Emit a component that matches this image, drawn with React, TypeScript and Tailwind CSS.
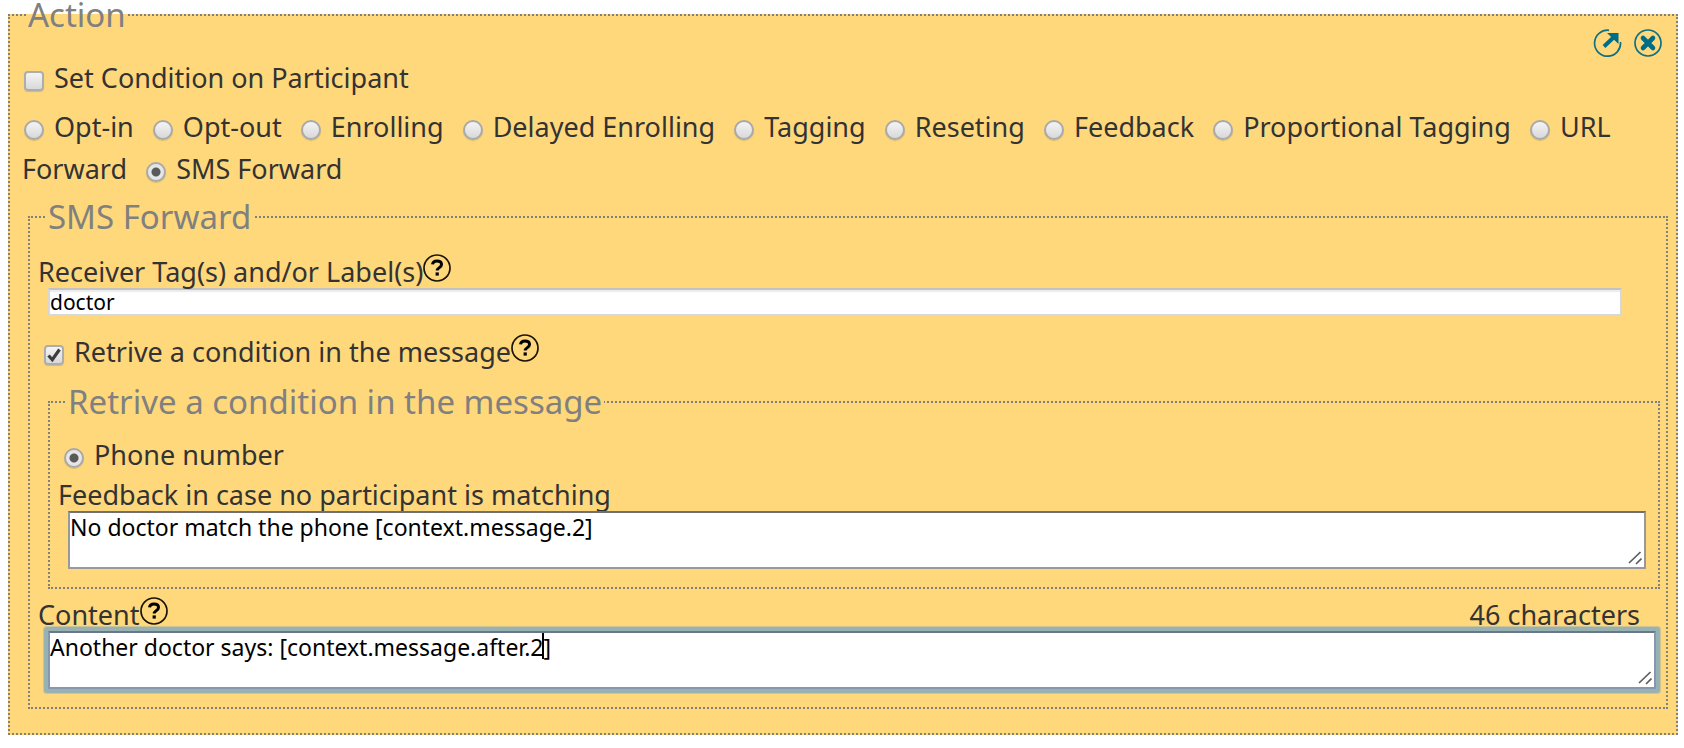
import { useId, useState } from "react";
import type { InputHTMLAttributes, ReactNode } from "react";

function Legend({ children, className }: { children: ReactNode; className: string }) {
  return (
    <legend className={`px-0.5 text-[33px] leading-7 text-[#808080] ${className}`}>{children}</legend>
  );
}

function Help() {
  return (
    <svg viewBox="0 0 28 28" className="inline size-7 align-baseline" role="img" aria-label="Help">
      <circle cx="14" cy="14" r="13" fill="none" stroke="#1a1408" strokeWidth="1.7" />
      <path
        d="M9.500 10.400C9.800 8 11.500 7 14 7c2.700 0 4.500 1.300 4.500 3.400 0 3.200-4.300 3.200-4.300 6.200"
        fill="none"
        stroke="#000"
        strokeWidth="3"
      />
      <rect x="12.600" y="18.400" width="3.200" height="3.200" fill="#000" />
    </svg>
  );
}

function Radio(props: InputHTMLAttributes<HTMLInputElement>) {
  return (
    <input
      type="radio"
      className="mr-2.5 ml-0.5 inline-block size-5 appearance-none rounded-full border-2 border-[#a9a9a9] bg-linear-to-b from-[#f4f4f4] to-[#d9d9d9] align-[-3px] shadow-[0_1px_1px_rgba(0,0,0,0.15)] checked:bg-[radial-gradient(circle,#5a5a5a_4px,#e6e6e6_5px)]"
      {...props}
    />
  );
}

function Checkbox(props: InputHTMLAttributes<HTMLInputElement>) {
  return (
    <span className="relative mr-2.5 ml-0.5 inline-block size-5 align-[-3px]">
      <input
        type="checkbox"
        className="peer block size-5 appearance-none rounded-[4px] border-2 border-[#adadad] bg-linear-to-b from-[#f4f4f4] to-[#d9d9d9] shadow-[0_1px_1px_rgba(0,0,0,0.15)]"
        {...props}
      />
      <svg
        viewBox="0 0 20 20"
        className="pointer-events-none absolute inset-0 hidden size-5 peer-checked:block"
        aria-hidden="true"
      >
        <path d="M4.500 10.500l3.800 4.200L15.500 4.500" fill="none" stroke="#3c3c3c" strokeWidth="3.200" />
      </svg>
    </span>
  );
}

function Grip() {
  return (
    <svg
      viewBox="0 0 14 14"
      className="pointer-events-none absolute right-1 bottom-1 size-3.5"
      aria-hidden="true"
    >
      <path d="M1 12L12.500 1M8 13l5.500-5.500" fill="none" stroke="#5c5c5c" strokeWidth="1.700" />
    </svg>
  );
}

const actions = [
  "Opt-in",
  "Opt-out",
  "Enrolling",
  "Delayed Enrolling",
  "Tagging",
  "Reseting",
  "Feedback",
  "Proportional Tagging",
  "URL Forward",
  "SMS Forward",
];

export default function App() {
  const id = useId();
  const [action, setAction] = useState("SMS Forward");

  return (
    <div className="bg-white pt-px pr-1.5 pb-3 pl-2 font-['Noto_Sans',sans-serif] text-[27px] leading-8 text-[#333]">
      <fieldset className="border-2 border-dotted border-[#808080] bg-[#ffd87c] pr-2 pb-6 pl-3">
        <Legend className="ml-1">Action</Legend>

        <div className="flex h-7 justify-end gap-3 pr-1.5">
          <button type="button" aria-label="Expand" className="h-7 w-[30px]">
            <svg viewBox="0 0 30 28" className="h-7 w-[30px]" fill="none" aria-hidden="true">
              <path d="M17 1.300A13 13 0 1 0 28.500 13" stroke="#0e7080" strokeWidth="1.700" />
              <path d="M12 17.500L22 8" stroke="#006c86" strokeWidth="4" />
              <path d="M15 4h11.500v11z" fill="#006c86" />
            </svg>
          </button>
          <button type="button" aria-label="Close" className="size-7">
            <svg viewBox="0 0 28 28" className="size-7" fill="none" aria-hidden="true">
              <circle cx="14" cy="14" r="13" stroke="#0e7080" strokeWidth="1.700" />
              <path d="M9 9l10 10M19 9l-10 10" stroke="#006c86" strokeWidth="4.600" strokeLinecap="round" />
            </svg>
          </button>
        </div>

        <div className="leading-[42px]">
          <label>
            <Checkbox />
            Set Condition on Participant
          </label>
        </div>

        <div className="mt-[7px] leading-[42px]">
          {actions.map((name) => (
            <span key={name}>
              <label className="mr-2.5">
                <Radio name={`${id}-action`} checked={action === name} onChange={() => setAction(name)} />
                {name}
              </label>{" "}
            </span>
          ))}
        </div>

        <fieldset className="mt-[13px] ml-1.5 border-2 border-dotted border-[#808080] pr-1.5 pb-[18px] pl-2">
          <Legend className="ml-2">SMS Forward</Legend>

          <div className="pt-[23px]">
            <label htmlFor={`${id}-receiver`}>Receiver Tag(s) and/or Label(s)</label>
            <Help />
          </div>
          <div className="pr-[38px] pl-2.5">
            <input
              id={`${id}-receiver`}
              type="text"
              defaultValue="doctor"
              className="block h-7 w-full border-2 border-[#d8d8d8] border-t-[#c3c3c3] bg-white text-[21px] leading-6 text-black shadow-[inset_0_2px_1px_#ececec] outline-none"
            />
          </div>

          <div className="mt-[18px] pl-1">
            <label>
              <Checkbox defaultChecked />
              Retrive a condition in the message
            </label>
            <Help />
          </div>

          <fieldset className="mt-5 ml-2.5 border-2 border-dotted border-[#808080] pr-3 pb-[18px] pl-2">
            <Legend className="ml-2">Retrive a condition in the message</Legend>

            <div className="pt-[23px] pl-1">
              <label>
                <Radio name={`${id}-condition`} defaultChecked />
                Phone number
              </label>
            </div>
            <label htmlFor={`${id}-feedback`} className="mt-2 block">
              Feedback in case no participant is matching
            </label>
            <div className="relative ml-2.5">
              <textarea
                id={`${id}-feedback`}
                defaultValue="No doctor match the phone [context.message.2]"
                className="block h-[58px] w-full resize-none border-2 border-[#999] border-t-[#707070] bg-white text-[23px] leading-7 text-black outline-none"
              />
              <Grip />
            </div>
          </fieldset>

          <div className="mt-2 flex items-baseline justify-between pr-5">
            <div>
              <label htmlFor={`${id}-content`}>Content</label>
              <Help />
            </div>
            <span>46 characters</span>
          </div>
          <div className="relative mr-1 ml-2.5">
            <textarea
              id={`${id}-content`}
              defaultValue="Another doctor says: [context.message.after.2]"
              className="block h-[58px] w-full resize-none rounded-[1px] border-2 border-[#8797ae] border-t-[#6a7788] bg-white text-[23px] leading-7 text-black caret-transparent shadow-[0_0_0_4px_#98b2b4,0_0_0_5px_#cdc596] outline-none"
            />
            <span className="pointer-events-none absolute top-0.5 left-[494px] h-[26px] w-0.5 bg-black" />
            <Grip />
          </div>
        </fieldset>
      </fieldset>
    </div>
  );
}
